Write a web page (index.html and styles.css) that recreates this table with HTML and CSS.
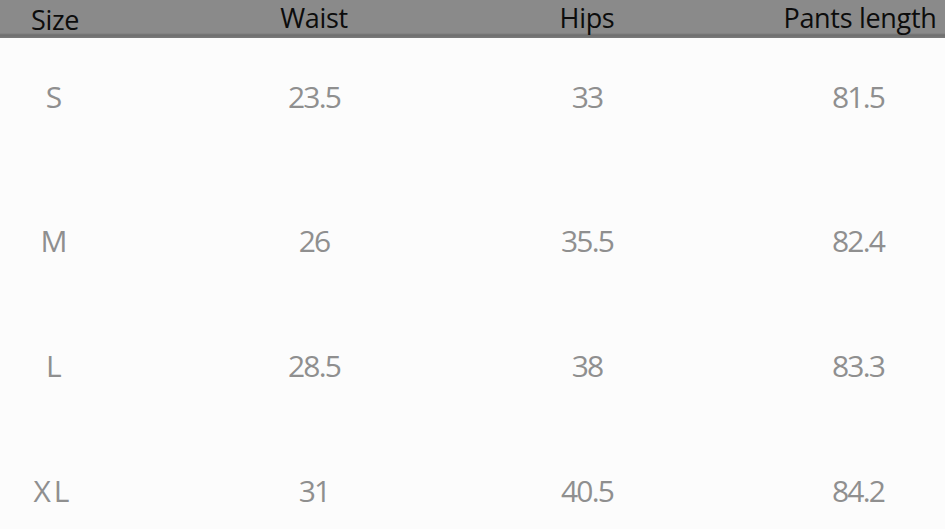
FILE: index.html
```html
<!DOCTYPE html>
<html lang="en">
<head>
<meta charset="utf-8">
<title>Size chart</title>
<link rel="stylesheet" href="styles.css">
</head>
<body>
<div class="chart">
  <div class="head">
    <div class="hcell low">Size</div>
    <div class="hcell">Waist</div>
    <div class="hcell">Hips</div>
    <div class="hcell">Pants length</div>
  </div>
  <div class="row first">
    <div class="cell">S</div><div class="cell">23.5</div><div class="cell">33</div><div class="cell">81.5</div>
  </div>
  <div class="row">
    <div class="cell">M</div><div class="cell">26</div><div class="cell">35.5</div><div class="cell">82.4</div>
  </div>
  <div class="row">
    <div class="cell">L</div><div class="cell">28.5</div><div class="cell">38</div><div class="cell">83.3</div>
  </div>
  <div class="row">
    <div class="cell wide">XL</div><div class="cell">31</div><div class="cell">40.5</div><div class="cell">84.2</div>
  </div>
</div>
</body>
</html>
```
FILE: styles.css
```css
html, body {
  margin: 0;
  padding: 0;
  background: #fcfcfc;
}
.chart {
  width: 945px;
  height: 529px;
  overflow: hidden;
  font-family: "Open Sans", "Noto Sans", sans-serif;
}
.head {
  display: grid;
  grid-template-columns: 110px 172px 138px 172px;
  column-gap: 118px;
  height: 38px;
  background: linear-gradient(to bottom, #8a8a8a 0, #8a8a8a 33px, #6e6e6e 35px, #7a7a7a 38px);
  align-items: start;
}
.hcell {
  text-align: center;
  color: #0c0c0c;
  font-size: 27px;
  line-height: 36px;
  white-space: nowrap;
  letter-spacing: -0.3px;
}
.hcell.low {
  padding-top: 2px;
}
.row {
  display: grid;
  grid-template-columns: 106px 172px 130px 168px;
  column-gap: 122px;
  height: 125px;
  align-items: center;
}
.row.first {
  height: 118px;
  margin-bottom: 22px;
}
.cell {
  text-align: center;
  color: #8f8f8f;
  font-size: 30px;
  letter-spacing: -1.8px;
  line-height: 1;
}
.cell.wide {
  letter-spacing: 3px;
}
```
